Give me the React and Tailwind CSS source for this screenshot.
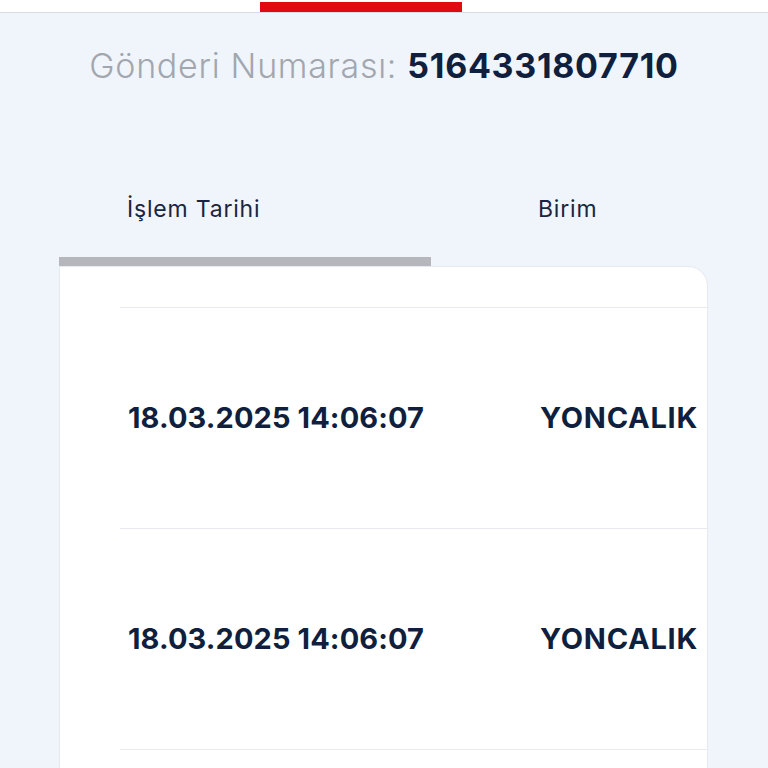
import React from "react";

const rows = [
  { date: "18.03.2025 14:06:07", unit: "YONCALIK" },
  { date: "18.03.2025 14:06:07", unit: "YONCALIK" },
];

const App = () => {
  return (
    <div className="h-screen bg-[#f0f4fb] font-['Inter','Noto_Sans',sans-serif] overflow-hidden">
      {/* Top bar */}
      <div className="h-[13px] bg-white border-b border-[#d9dce2]">
        <div className="ml-[260px] pt-[2px]">
          <div className="h-[10px] w-[202px] bg-[#e00a10]" />
        </div>
      </div>

      {/* Shipment number */}
      <h1 className="mt-[33px] text-center text-[34px] leading-[40px] tracking-[0.7px]">
        <span className="font-light text-[#a2a6af]">Gönderi Numarası: </span>
        <span className="font-bold text-[#0f1f3d]">5164331807710</span>
      </h1>

      {/* Tabs */}
      <div className="mt-[107px] ml-[59px] mr-[60px] flex">
        <div className="w-[372px] flex flex-col">
          <div className="pl-[68px] text-[23px] leading-[32px] tracking-[0.8px] text-[#1b2540]">İşlem Tarihi</div>
          <div className="mt-[32px] h-[9px] bg-[#b5b7bd]" />
        </div>
        <div className="flex-1 flex flex-col">
          <div className="pl-[107px] text-[23px] leading-[32px] tracking-[0.8px] text-[#1b2540]">Birim</div>
          <div className="mt-[32px] h-[9px]" />
        </div>
      </div>

      {/* Table card */}
      <div className="ml-[59px] mr-[60px] bg-white border border-[#e6e9ef] rounded-tr-[20px] pl-[60px]">
        <div className="h-[41px] border-b border-[#e8eaef]" />
        {rows.map((r, i) => (
          <div key={i} className="h-[221px] border-b border-[#e8eaef] flex items-center">
            <div className="w-[420px] pl-[8px] text-[29px] font-bold text-[#0f1f3d] tracking-[0.1px]">
              {r.date}
            </div>
            <div className="flex-1 text-[29px] font-bold text-[#0f1f3d] tracking-[0.75px]">
              {r.unit}
            </div>
          </div>
        ))}
        <div className="h-[220px]" />
      </div>
    </div>
  );
};

export default App;
